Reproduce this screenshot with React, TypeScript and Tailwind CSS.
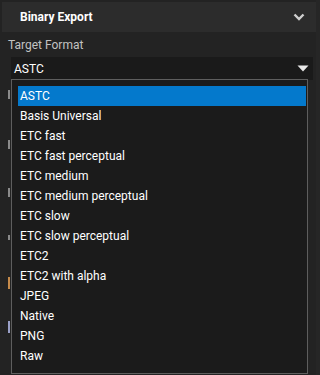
import React from "react";

const items = [
  "ASTC",
  "Basis Universal",
  "ETC fast",
  "ETC fast perceptual",
  "ETC medium",
  "ETC medium perceptual",
  "ETC slow",
  "ETC slow perceptual",
  "ETC2",
  "ETC2 with alpha",
  "JPEG",
  "Native",
  "PNG",
  "Raw",
];

function Stub({ mt, color = "#8a8a8a", h = "h-[9px]" }: { mt: string; color?: string; h?: string }) {
  return (
    <div className={`${mt} h-[24px] flex items-center`}>
      <span className={`inline-block w-[2px] ${h}`} style={{ background: color }} />
    </div>
  );
}

export default function App() {
  return (
    <div
      className="relative w-[320px] h-[375px] overflow-hidden bg-[#232323] text-[12px]"
      style={{ fontFamily: 'Roboto, "Open Sans", sans-serif' }}
    >
      <div className="mx-[2px] mt-[2px] h-[30px] w-[314px] bg-[#2c2c2c] flex items-center justify-between pl-[18px] pr-[11px]">
        <span className="text-white font-bold text-[12px]">Binary Export</span>
        <svg width="12" height="8" viewBox="0 0 12 8">
          <path d="M1.5 1.5 L6 6 L10.5 1.5" stroke="#cfcfcf" strokeWidth="2.4" fill="none" />
        </svg>
      </div>
      <div className="pl-[8px] pt-[4px] text-[#c2c2c2] text-[12px] leading-[18px]">Target Format</div>
      <div className="ml-[11px] mt-[3px] w-[302px] h-[23px] bg-[#1a1a1a] flex items-center justify-between pl-[3px] pr-[4px]">
        <span className="text-white text-[12px]">ASTC</span>
        <svg width="12" height="7" viewBox="0 0 12 7">
          <path d="M0.5 0.5 L11.5 0.5 L6 6.5 Z" fill="#e8e8e8" />
        </svg>
      </div>
      <div className="pl-[8px]">
        <Stub mt="mt-[2px]" />
        <Stub mt="mt-[26px]" />
        <Stub mt="mt-[24px]" />
        <Stub mt="mt-[21px]" h="h-[5px]" />
        <Stub mt="mt-[22px]" color="#c58a4a" h="h-[12px]" />
        <Stub mt="mt-[20px]" color="#9aa0c8" h="h-[12px]" />
      </div>
      <div className="absolute left-[11px] top-[79px] w-[297px] h-[295px] bg-[#1b1b1b] border border-[#5e5e5e] pt-[6px] pl-[6px] pr-[1px]">
        {items.map((it, i) => (
          <div
            key={it}
            className={`h-[20px] flex items-center pl-[2px] text-white text-[12px] ${
              i === 0 ? "bg-[#0479cc]" : ""
            }`}
          >
            {it}
          </div>
        ))}
      </div>
      <div className="absolute right-0 top-0 w-[4px] h-[375px] bg-[#262626]" />
    </div>
  );
}
